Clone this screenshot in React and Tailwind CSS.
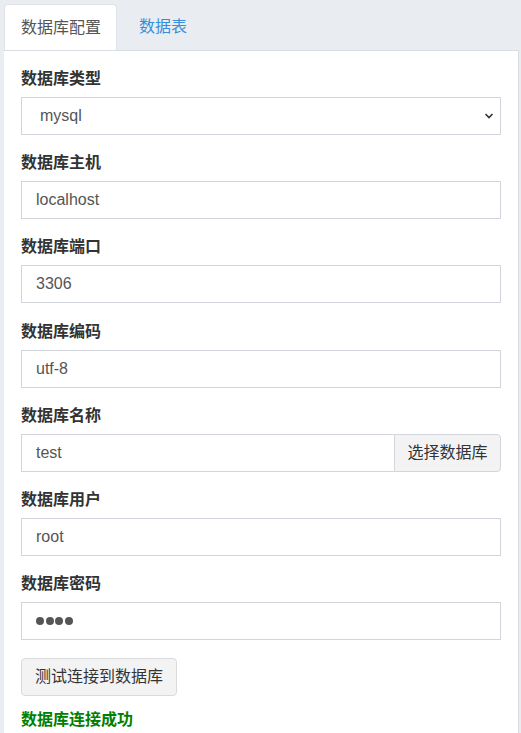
import React from "react";

const font = { fontFamily: '"Liberation Sans", Arial, "Noto Sans CJK SC", sans-serif' };

function Label({ children }) {
  return (
    <div className="text-[16px] leading-[24px] font-bold text-[#333] mb-[6px]">{children}</div>
  );
}

function TextInput({ value, type = "text" }) {
  return (
    <input
      type={type}
      defaultValue={value}
      readOnly
      className="block w-full h-[38px] border border-[#d2d5db] bg-white px-[14px] text-[16px] text-[#555] outline-none"
      style={font}
    />
  );
}

export default function App() {
  return (
    <div className="min-h-[733px] bg-[#e9ecf1] pt-1 pl-1 pr-[2px]" style={font}>
      <div className="flex h-[46px]">
        <div className="w-[113px] bg-white rounded-t-[4px] border border-b-0 border-[#dfe2e7] flex items-center pl-[16px] text-[16px] text-[#555]">
          数据库配置
        </div>
        <div className="flex items-center pl-[22px] text-[16px] text-[#3a8ed9]">数据表</div>
      </div>
      <div className="bg-white border-t border-r border-[#d9dde2] pl-[17px] pr-[17px] pt-[16px] pb-[20px]">
        <div className="mb-[16px]">
          <Label>数据库类型</Label>
          <div className="relative">
            <select
              className="block w-full h-[38px] border border-[#d2d5db] bg-white pl-[18px] text-[16px] text-[#555] outline-none appearance-none"
              style={font}
              defaultValue="mysql"
            >
              <option value="mysql">mysql</option>
            </select>
            <svg
              className="absolute right-[7px] top-[15px] pointer-events-none"
              width="10"
              height="8"
              viewBox="0 0 10 8"
            >
              <path d="M1.5 2 L5 5.5 L8.5 2" fill="none" stroke="#333" strokeWidth="1.6" />
            </svg>
          </div>
        </div>
        <div className="mb-[16px]">
          <Label>数据库主机</Label>
          <TextInput value="localhost" />
        </div>
        <div className="mb-[17px]">
          <Label>数据库端口</Label>
          <TextInput value="3306" />
        </div>
        <div className="mb-[16px]">
          <Label>数据库编码</Label>
          <TextInput value="utf-8" />
        </div>
        <div className="mb-[16px]">
          <Label>数据库名称</Label>
          <div className="flex h-[38px]">
            <input
              type="text"
              defaultValue="test"
              readOnly
              className="block flex-1 min-w-0 h-[38px] border border-r-0 border-[#d2d5db] bg-white px-[14px] text-[16px] text-[#555] outline-none"
              style={font}
            />
            <div className="w-[107px] h-[38px] flex items-center justify-center border border-[#d2d5db] bg-[#f3f3f3] rounded-r-[4px] text-[16px] text-[#333]">
              选择数据库
            </div>
          </div>
        </div>
        <div className="mb-[16px]">
          <Label>数据库用户</Label>
          <TextInput value="root" />
        </div>
        <div className="mb-[18px]">
          <Label>数据库密码</Label>
          <div className="flex items-center gap-[1.5px] w-full h-[38px] border border-[#d2d5db] bg-white px-[14px]">
            <span className="block w-[8px] h-[8px] rounded-full bg-[#555]" />
            <span className="block w-[8px] h-[8px] rounded-full bg-[#555]" />
            <span className="block w-[8px] h-[8px] rounded-full bg-[#555]" />
            <span className="block w-[8px] h-[8px] rounded-full bg-[#555]" />
          </div>
        </div>
        <div className="inline-flex items-center h-[38px] px-[13px] border border-[#d9dbdf] bg-[#f3f3f3] rounded-[4px] text-[16px] text-[#333]">
          测试连接到数据库
        </div>
        <div className="mt-[12px] text-[16px] leading-[24px] font-bold text-[#008000]">数据库连接成功</div>
      </div>
    </div>
  );
}
